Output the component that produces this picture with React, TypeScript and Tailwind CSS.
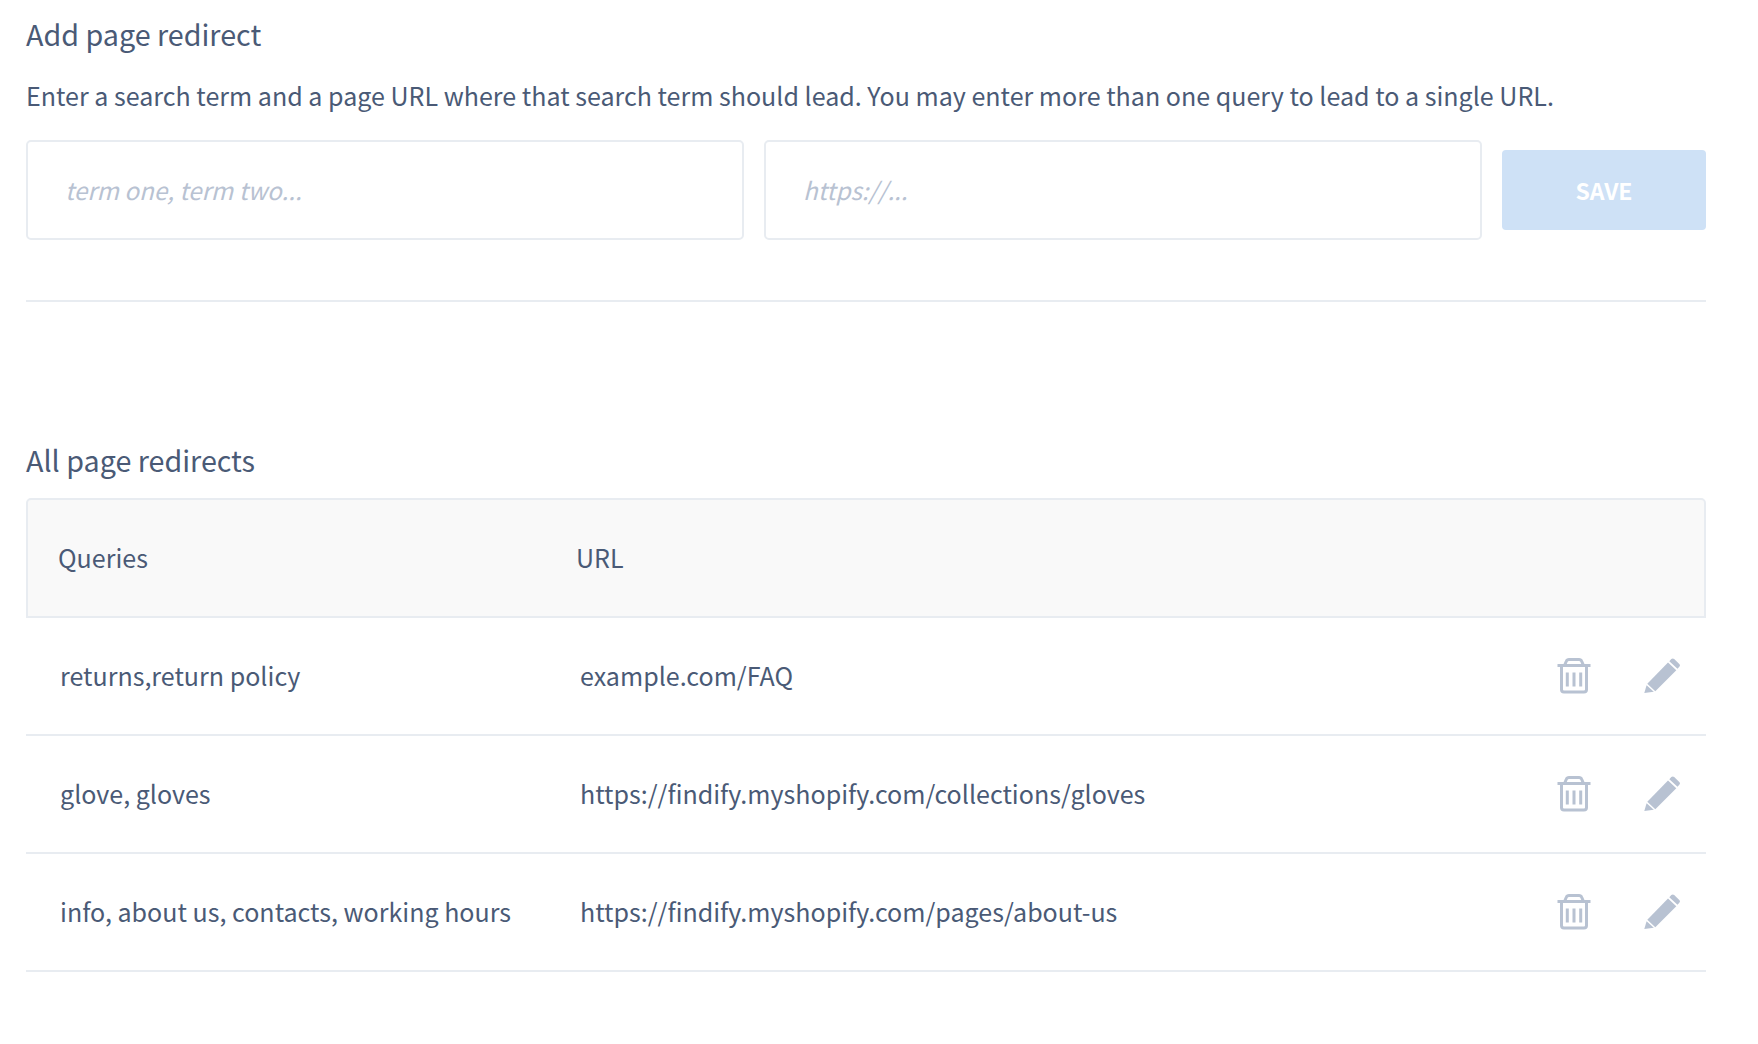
const FONT = "font-['Noto_Sans_CJK_SC','Noto_Sans',sans-serif]";

const rows = [
  { queries: "returns,return policy", url: "example.com/FAQ" },
  { queries: "glove, gloves", url: "https://findify.myshopify.com/collections/gloves" },
  {
    queries: "info, about us, contacts, working hours",
    url: "https://findify.myshopify.com/pages/about-us",
  },
];

function TrashIcon() {
  return (
    <svg width="34" height="36" viewBox="0 0 34 36" fill="none" stroke="#b8c2d2" strokeWidth="3">
      <path d="M0.500 7.500h33" />
      <path d="M7.500 7.500 9.300 3.300C9.800 2 10.600 1.500 12 1.500h10c1.400 0 2.200.5 2.700 1.800l1.800 4.200" />
      <path d="M4.500 7.500v24c0 1.500.8 2.500 2.500 2.500h20c1.700 0 2.500-1 2.500-2.500v-24" />
      <path d="M10.300 14.500v14M17 14.500v14M23.700 14.500v14" />
    </svg>
  );
}

function PencilIcon() {
  return (
    <svg width="36" height="36" viewBox="0 0 36 36" fill="#b8c2d2">
      <path d="M0.300 35 2.600 27.200l7.200 6.600z" />
      <path d="M3.300 25.800 24 4.600 32.300 12.200 11.300 33.200z" />
      <path d="M25.300 3.200 27.300 1.100c.9-.9 2-.9 2.900 0l5.100 4.800c.9.900.9 2 0 2.900l-1.800 2z" />
    </svg>
  );
}

export default function App() {
  return (
    <div className={`${FONT} min-h-[1044px] bg-white px-[26px] text-[#4a5a76]`}>
      <div className="w-[1680px]">
        <h2 className="pt-[13px] text-[28.7px] leading-[42px]">Add page redirect</h2>
        <p className="mt-[21px] text-[25.06px] leading-[38px]">
          Enter a search term and a page URL where that search term should lead. You may enter more
          than one query to lead to a single URL.
        </p>

        <div className="mt-[26px] flex items-center gap-[20px] border-b-2 border-[#e8ecf1] pb-[60px]">
          <div className="flex h-[100px] w-[718px] items-center rounded-[5px] border-2 border-[#e8ecf1] px-[37px] text-[24.2px] italic text-[#b8c2d2]">
            term one, term two...
          </div>
          <div className="flex h-[100px] w-[718px] items-center rounded-[5px] border-2 border-[#e8ecf1] px-[37px] text-[24.2px] italic text-[#b8c2d2]">
            https://...
          </div>
          <button className="flex h-[80px] w-[204px] items-center justify-center rounded-[4px] bg-[#cee1f6] text-[23px] font-semibold text-white">
            SAVE
          </button>
        </div>

        <h2 className="mt-[137px] text-[28.7px] leading-[42px]">All page redirects</h2>

        <div className="mt-[17px] flex h-[120px] items-center rounded-t-[5px] border-2 border-[#e8ecf1] bg-[#f9f9f9] text-[25.06px]">
          <div className="w-[548px] shrink-0 pl-[30px]">Queries</div>
          <div>URL</div>
        </div>

        {rows.map((row) => (
          <div
            key={row.url}
            className="flex h-[118px] items-center border-b-2 border-[#e8ecf1] text-[25.06px]"
          >
            <div className="w-[554px] shrink-0 pl-[34px]">{row.queries}</div>
            <div className="flex-1">{row.url}</div>
            <div className="flex items-center gap-[53px] pr-[26px]">
              <TrashIcon />
              <PencilIcon />
            </div>
          </div>
        ))}
      </div>
    </div>
  );
}
